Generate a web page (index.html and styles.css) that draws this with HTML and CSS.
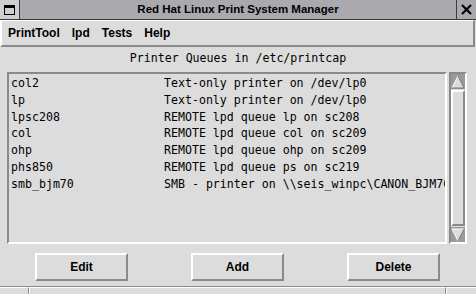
FILE: index.html
```html
<!DOCTYPE html>
<html lang="en">
  <head>
    <meta charset="UTF-8" />
    <title>Red Hat Linux Print System Manager</title>
    <link rel="stylesheet" href="styles.css">
  </head>
  <body>
    <main class="window">
      <header class="titlebar">
        <div class="menu-box">
          <svg width="11" height="10" viewBox="0 0 11 10">
            <rect x="0.5" y="0.5" width="10" height="9" fill="none" stroke="#000" />
            <rect x="0" y="0" width="11" height="3" fill="#000" />
          </svg>
        </div>
        <h1>Red Hat Linux Print System Manager</h1>
        <div class="close-box">
          <svg width="11" height="11" viewBox="0 0 11 11">
            <path d="M1 1 L10 10 M10 1 L1 10" stroke="#000" stroke-width="2.2" />
          </svg>
        </div>
      </header>

      <nav class="menubar">
        <span>PrintTool</span>
        <span>lpd</span>
        <span>Tests</span>
        <span>Help</span>
      </nav>

      <p class="caption">Printer Queues in /etc/printcap</p>

      <section class="queues">
        <div class="listbox">
          <div class="row"><span class="name">col2</span><span>Text-only printer on /dev/lp0</span></div>
          <div class="row"><span class="name">lp</span><span>Text-only printer on /dev/lp0</span></div>
          <div class="row"><span class="name">lpsc208</span><span>REMOTE lpd queue lp on sc208</span></div>
          <div class="row"><span class="name">col</span><span>REMOTE lpd queue col on sc209</span></div>
          <div class="row"><span class="name">ohp</span><span>REMOTE lpd queue ohp on sc209</span></div>
          <div class="row"><span class="name">phs850</span><span>REMOTE lpd queue ps on sc219</span></div>
          <div class="row"><span class="name">smb_bjm70</span><span>SMB - printer on \\seis_winpc\CANON_BJM70</span></div>
        </div>

        <div class="scrollbar">
          <div class="arrow">
            <svg width="14" height="14" viewBox="0 0 14 14">
              <polygon points="7,1 1,13 13,13" fill="#dcdcdc" />
              <polyline points="1,13 7,1" fill="none" stroke="#fff" />
              <polyline points="7,1 13,13 1,13" fill="none" stroke="#7a7a7a" />
            </svg>
          </div>
          <div class="slider"></div>
          <div class="arrow">
            <svg width="14" height="14" viewBox="0 0 14 14">
              <polygon points="1,1 13,1 7,13" fill="#dcdcdc" />
              <polyline points="7,13 1,1 13,1" fill="none" stroke="#fff" />
              <polyline points="13,1 7,13" fill="none" stroke="#7a7a7a" />
            </svg>
          </div>
        </div>
      </section>

      <footer class="actions">
        <button>Edit</button>
        <button>Add</button>
        <button>Delete</button>
      </footer>

      <div class="statusbar">
        <span class="cell small"></span>
        <span class="cell wide"></span>
        <span class="cell"></span>
      </div>
    </main>
  </body>
</html>
```

FILE: styles.css
```css
*,
*::before,
*::after {
  box-sizing: border-box;
  margin: 0;
  padding: 0;
}

body {
  width: 476px;
  height: 294px;
  overflow: hidden;
  background: #dcdcdc;
  font-family: 'Liberation Sans', Arial, sans-serif;
  color: #000;
}

.window {
  display: flex;
  flex-direction: column;
  height: 294px;
}

.titlebar {
  display: flex;
  height: 20px;
  background: #a9a9ae;
  border-bottom: 1px solid #3c3c3c;

  & .menu-box,
  & .close-box {
    width: 20px;
    display: grid;
    place-content: center;
  }

  & .menu-box {
    background: #cfcfd2;
    border-right: 1px solid #3c3c3c;
  }

  & .close-box {
    width: 20px;
    border-left: 1px solid #3c3c3c;
  }

  & h1 {
    flex: 1;
    text-align: center;
    font-size: 11.5px;
    font-weight: bold;
    line-height: 19px;
  }
}

.menubar {
  display: flex;
  gap: 12px;
  height: 27px;
  align-items: center;
  padding-left: 6px;
  margin: 0 1px 0 0;
  border-top: 1px solid #fff;
  border-left: 2px solid #fff;
  border-right: 2px solid #8a8a8a;
  border-bottom: 2px solid #8a8a8a;
  font-size: 12px;
  font-weight: bold;
}

.caption,
.listbox {
  font-family: 'DejaVu Sans Mono', monospace;
  font-size: 11.6px;
}

.caption {
  height: 25px;
  line-height: 23px;
  text-align: center;
}

.queues {
  display: flex;
  gap: 2px;
  height: 172px;
  padding-left: 7px;
}

.listbox {
  width: 440px;
  padding: 1px 0 0 2px;
  overflow: hidden;
  white-space: nowrap;
  border-top: 2px solid #8a8a8a;
  border-left: 2px solid #8a8a8a;
  border-right: 2px solid #fff;
  border-bottom: 2px solid #fff;

  & .row {
    display: flex;
    height: 16.75px;
    line-height: 16.75px;
  }

  & .name {
    width: 153px;
    flex: none;
  }
}

.scrollbar {
  width: 18px;
  display: flex;
  flex-direction: column;
  border-top: 2px solid #8a8a8a;
  border-left: 2px solid #8a8a8a;
  border-right: 2px solid #fff;
  border-bottom: 2px solid #fff;

  & .arrow {
    height: 15px;
    display: grid;
    place-content: center;
    background: #9a9a9a;
  }

  & .slider {
    flex: 1;
    margin: 1px 0;
    border-top: 2px solid #fff;
    border-left: 2px solid #fff;
    border-right: 2px solid #8a8a8a;
    border-bottom: 2px solid #8a8a8a;
  }
}

.actions {
  display: flex;
  gap: 63px;
  padding: 9px 0 0 35px;
  height: 42px;

  & button {
    width: 93px;
    height: 28px;
    background: #dcdcdc;
    font-family: 'Liberation Sans', Arial, sans-serif;
    font-size: 12px;
    font-weight: bold;
    border-top: 2px solid #fff;
    border-left: 2px solid #fff;
    border-right: 2px solid #8a8a8a;
    border-bottom: 2px solid #8a8a8a;
  }
}

.statusbar {
  display: flex;
  flex: 1;
  border-top: 1px solid #8a8a8a;

  & .cell {
    border-top: 1px solid #fff;
    border-left: 1px solid #fff;
  }

  & .small {
    width: 29px;
    border-left: 0;
    border-right: 1px solid #8a8a8a;
  }

  & .wide {
    width: 417px;
    border-right: 1px solid #8a8a8a;
  }

  & .cell:last-child {
    flex: 1;
  }
}
```
